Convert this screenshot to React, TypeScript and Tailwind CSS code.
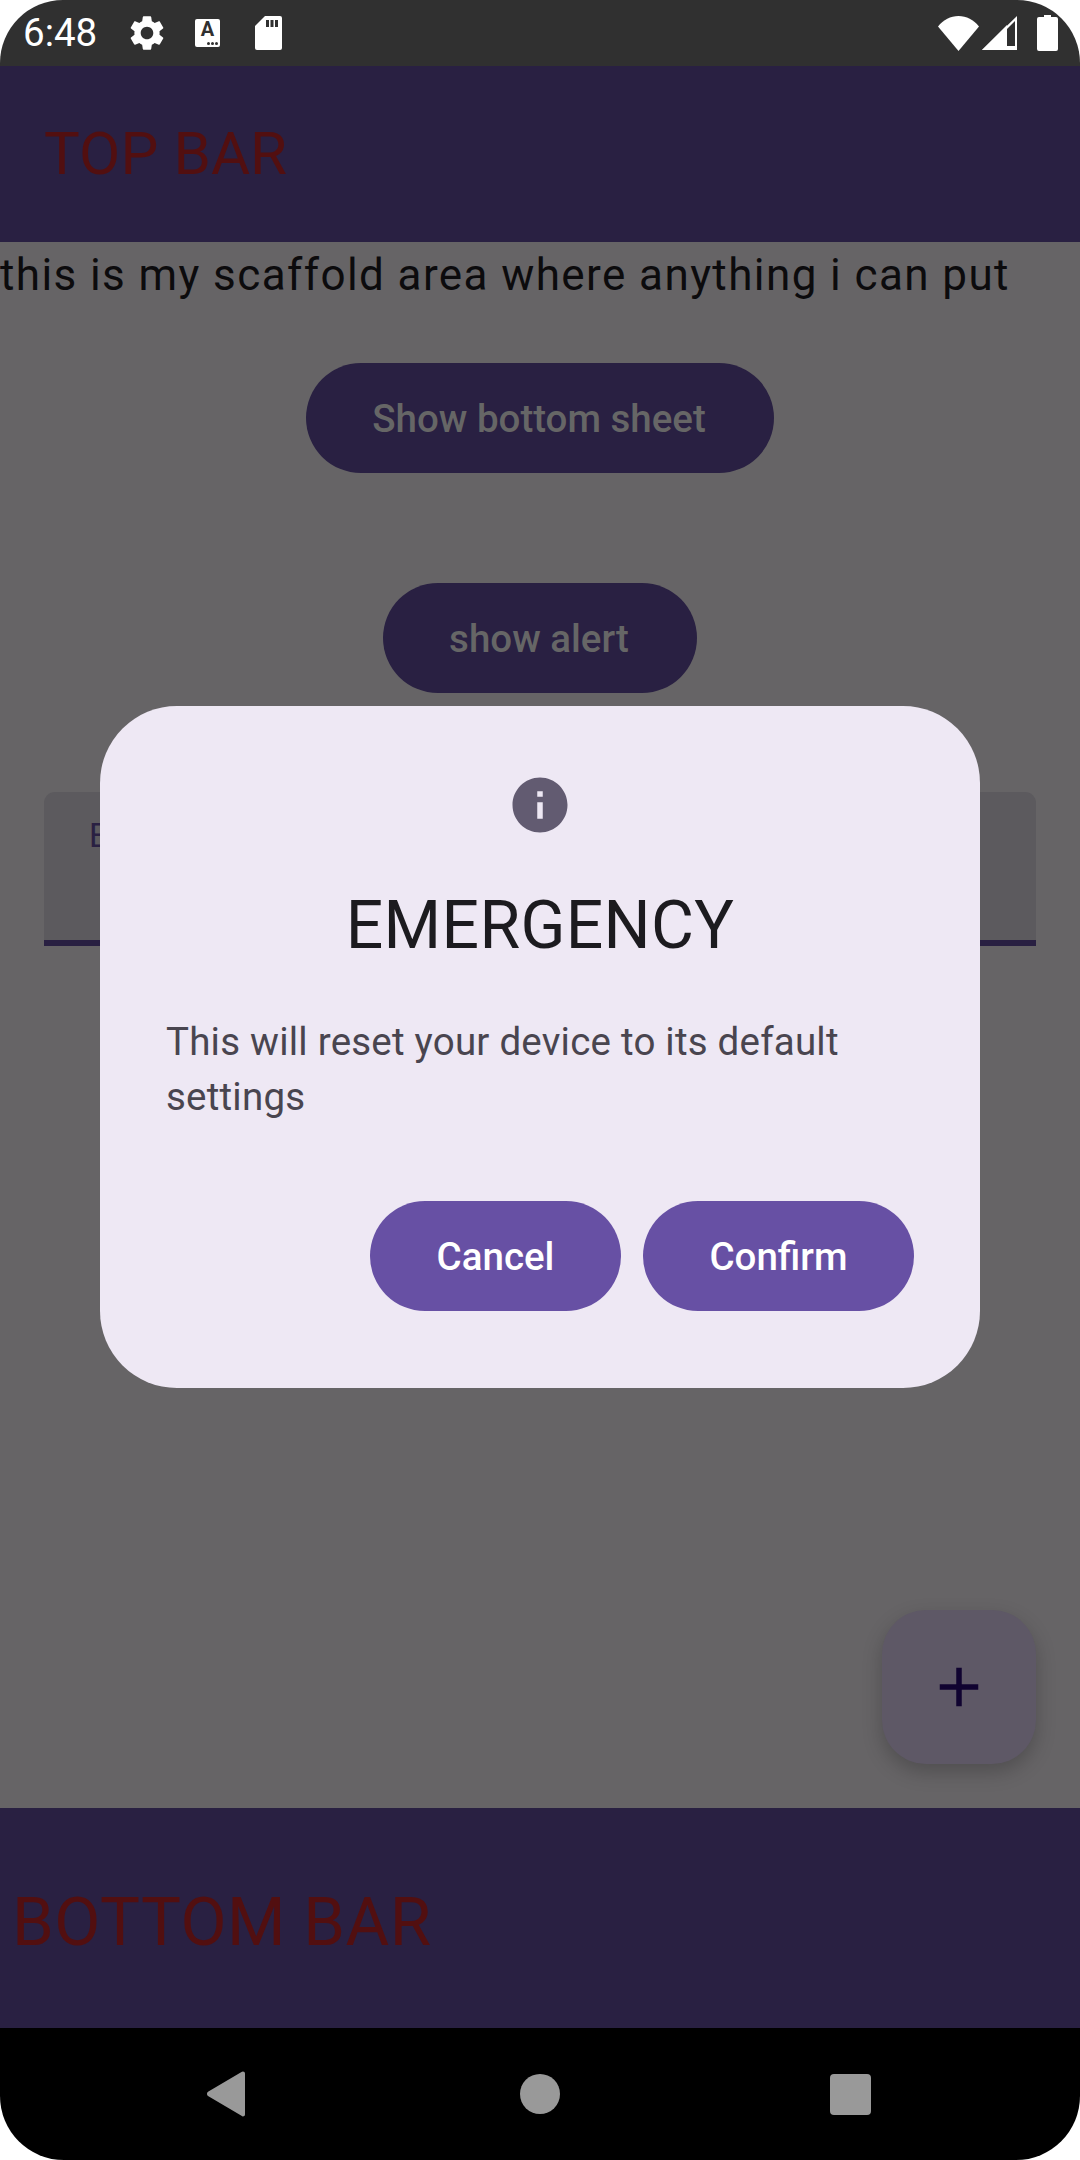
export default function App() {
  return (
    <div className="relative flex h-[2160px] w-[1080px] flex-col overflow-hidden bg-white font-['Roboto',sans-serif]">
      <div className="flex h-[66px] shrink-0 items-center rounded-t-[63px] bg-[#303030] pl-[23px] pr-[22px] text-white">
        <span className="w-[103px] text-[38.5px] leading-none">6:48</span>
        <svg className="h-[42px] w-[42px]" viewBox="0 0 24 24" fill="#fff">
          <path d="M19.14 12.94c.04-.3.06-.61.06-.94 0-.32-.02-.64-.07-.94l2.03-1.58c.18-.14.23-.41.12-.61l-1.92-3.32c-.12-.22-.37-.29-.59-.22l-2.39.96c-.5-.38-1.03-.7-1.62-.94l-.36-2.54c-.04-.24-.24-.41-.48-.41h-3.84c-.24 0-.43.17-.47.41l-.36 2.54c-.59.24-1.13.57-1.62.94l-2.39-.96c-.22-.08-.47 0-.59.22L2.74 8.87c-.12.21-.08.47.12.61l2.03 1.58c-.05.3-.09.63-.09.94s.02.64.07.94l-2.03 1.58c-.18.14-.23.41-.12.61l1.92 3.32c.12.22.37.29.59.22l2.39-.96c.5.38 1.03.7 1.62.94l.36 2.54c.05.24.24.41.48.41h3.84c.24 0 .44-.17.47-.41l.36-2.54c.59-.24 1.13-.56 1.62-.94l2.39.96c.22.08.47 0 .59-.22l1.92-3.32c.12-.22.07-.47-.12-.61l-2.01-1.58zM12 15.6c-1.98 0-3.6-1.62-3.6-3.6s1.62-3.6 3.6-3.6 3.6 1.62 3.6 3.6-1.62 3.6-3.6 3.6z" />
        </svg>
        <div className="relative ml-[27px] flex h-[28px] w-[25px] justify-center rounded-[2px] bg-white">
          <span className="text-[20px] font-bold leading-[21px] text-[#303030]">A</span>
          <span className="absolute bottom-[2px] right-[2px] flex gap-[1px]">
            <i className="h-[3px] w-[3px] rounded-full bg-[#303030]" />
            <i className="h-[3px] w-[3px] rounded-full bg-[#303030]" />
            <i className="h-[3px] w-[3px] rounded-full bg-[#303030]" />
          </span>
        </div>
        <svg className="ml-[35px] h-[34px] w-[27px]" viewBox="0 0 27 34">
          <path fill="#fff" d="M10 0H25a2 2 0 0 1 2 2V32a2 2 0 0 1-2 2H2a2 2 0 0 1-2-2V10Z" />
          <path fill="#303030" d="M11 4h3v7h-3zM15.5 4h3v7h-3zM20 4h3v7h-3z" />
        </svg>
        <div className="ml-auto flex items-center">
          <svg className="h-[35px] w-[41px]" viewBox="0 0 41 35">
            <path fill="#fff" d="M0 10.5C5.5 3.8 12.5 0 20.5 0S35.5 3.8 41 10.5L20.5 35Z" />
          </svg>
          <svg className="ml-[3px] h-[34px] w-[35px]" viewBox="0 0 35 34">
            <path fill="#fff" fillRule="evenodd" d="M35 0V34H0ZM33 5 25 13V30H33Z" />
            <path fill="#fff" d="M0 34 25 9V30H33V34Z" />
          </svg>
          <svg className="ml-[20px] h-[36px] w-[21px]" viewBox="0 0 21 36">
            <path fill="#fff" d="M7 0H14V2H19a2 2 0 0 1 2 2V34a2 2 0 0 1-2 2H2a2 2 0 0 1-2-2V4a2 2 0 0 1 2-2H7Z" />
          </svg>
        </div>
      </div>

      <div className="relative flex flex-1 flex-col bg-[#666466]">
        <div className="flex h-[176px] shrink-0 items-center bg-[#292042] pl-[44px]">
          <span className="text-[60px] leading-none tracking-[0.1px] text-[#520f10]">TOP BAR</span>
        </div>
        <div className="flex flex-1 flex-col items-center">
          <p className="w-full text-[44px] leading-[66px] tracking-[1.41px] text-[#0c0b0d]">
            this is my scaffold area where anything i can put
          </p>
          <div className="mt-[55px] flex h-[110px] w-[468px] items-center justify-center rounded-full bg-[#292042] pr-[2px] pt-[2px] text-[38.5px] font-medium text-[#666666]">
            Show bottom sheet
          </div>
          <div className="mt-[110px] flex h-[110px] w-[314px] items-center justify-center rounded-full bg-[#292042] pr-[2px] pt-[2px] text-[38.5px] font-medium text-[#666666]">
            show alert
          </div>
          <div className="mt-[99px] h-[154px] w-[992px] rounded-t-[11px] border-b-[6px] border-[#292042] bg-[#5c5a5e] pl-[45px] pt-[22px] text-[33px] leading-[44px] text-[#292042]">
            Enter
          </div>
        </div>
        <div className="absolute bottom-[264px] right-[44px] flex h-[154px] w-[154px] items-center justify-center rounded-[44px] bg-[#5e5866] shadow-[0_8px_20px_rgba(0,0,0,0.22)]">
          <svg className="h-[66px] w-[66px]" viewBox="0 0 24 24" fill="#100330">
            <path d="M19 13h-6v6h-2v-6H5v-2h6V5h2v6h6v2z" />
          </svg>
        </div>
        <div className="flex h-[220px] shrink-0 items-center bg-[#292042] pl-[12px] pt-[8px]">
          <span className="text-[67px] leading-none tracking-[0.5px] text-[#520f10]">BOTTOM BAR</span>
        </div>
      </div>

      <div className="flex h-[132px] shrink-0 items-center rounded-b-[64px] bg-black">
        <svg className="ml-[207px] h-[46px] w-[38px]" viewBox="0 0 38 46">
          <path fill="#999" d="M36 0.5a2 2 0 0 1 2 2V43.5a2 2 0 0 1-3.5 1.3L1 25a3 3 0 0 1 0-4.2L34.5 1a2 2 0 0 1 1.5-.5Z" />
        </svg>
        <div className="ml-[275px] h-[40px] w-[40px] rounded-full bg-[#999]" />
        <div className="ml-[270px] h-[41px] w-[41px] rounded-[4px] bg-[#999]" />
      </div>

      <div className="absolute inset-x-0 bottom-[132px] top-[66px] flex items-center justify-center">
        <div className="flex w-[880px] flex-col rounded-[77px] bg-[#eee8f4] p-[66px]">
          <div className="flex justify-center">
            <svg className="h-[66px] w-[66px]" viewBox="0 0 24 24" fill="#625b71">
              <path d="M12 2C6.48 2 2 6.48 2 12s4.48 10 10 10 10-4.48 10-10S17.52 2 12 2zm1 15h-2v-6h2v6zm0-8h-2V7h2v2z" />
            </svg>
          </div>
          <h2 className="mt-[44px] text-center text-[66px] font-normal leading-[88px] tracking-[0.35px] text-[#1c1b1f]">EMERGENCY</h2>
          <p className="mt-[44px] text-[38.5px] leading-[55px] tracking-[0.22px] text-[#49454f]">
            This will reset your device to its default settings
          </p>
          <div className="mt-[66px] flex h-[132px] items-center justify-end gap-[22px]">
            <div className="flex h-[110px] items-center rounded-full bg-[#6750a4] px-[66.5px] pt-[2px] text-[38.5px] font-medium leading-none text-white">Cancel</div>
            <div className="flex h-[110px] items-center rounded-full bg-[#6750a4] px-[66.5px] pt-[2px] text-[38.5px] font-medium leading-none text-white">Confirm</div>
          </div>
        </div>
      </div>
    </div>
  );
}
